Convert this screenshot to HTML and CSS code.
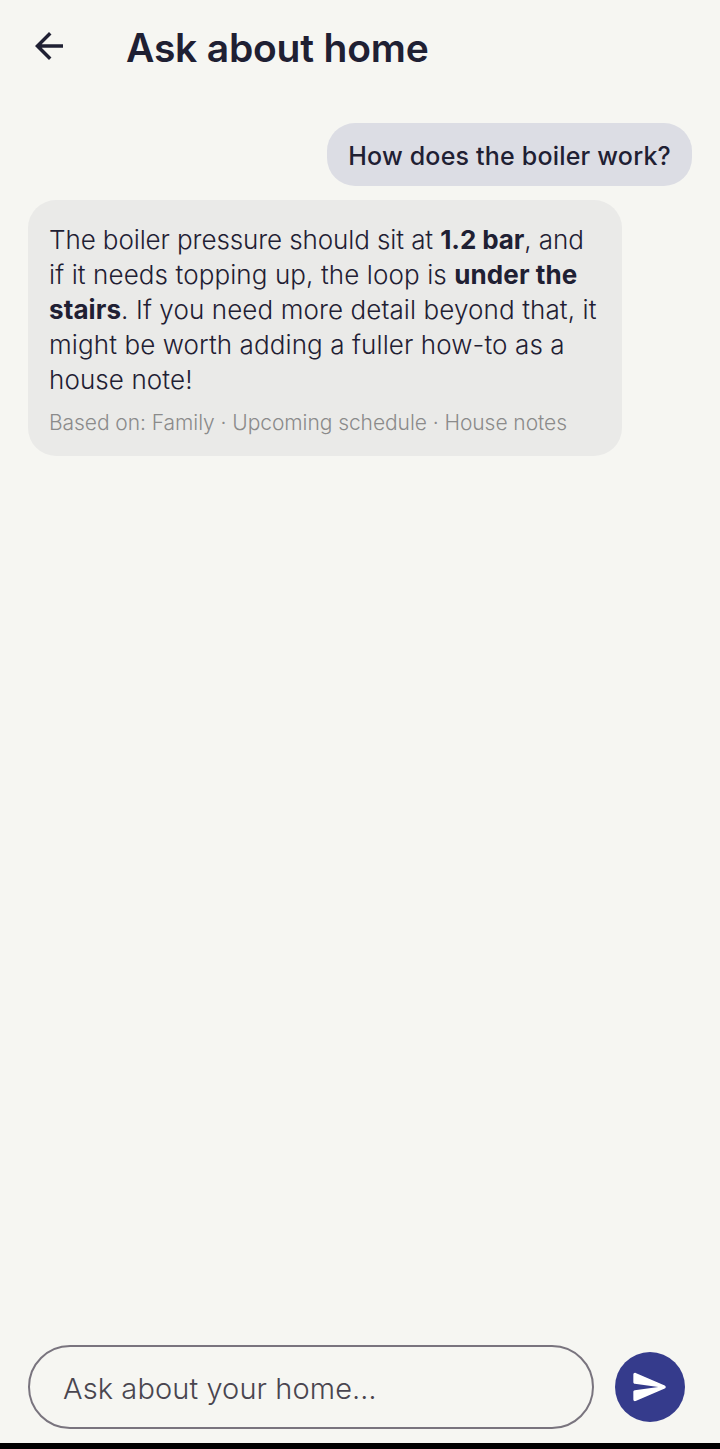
FILE: index.html
```html
<!DOCTYPE html>
<html lang="en">
<head>
<meta charset="utf-8">
<title>Ask about home</title>
<link rel="stylesheet" href="styles.css">
</head>
<body>
<div class="screen">
  <header class="topbar">
    <button class="back" aria-label="Back">
      <svg viewBox="0 0 24 24" width="42" height="42"><path d="M20 11H7.83l5.59-5.59L12 4l-8 8 8 8 1.41-1.41L7.83 13H20v-2z"/></svg>
    </button>
    <h1 class="title">Ask about home</h1>
  </header>
  <main class="thread">
    <div class="bubble user">How does the boiler work?</div>
    <div class="bubble reply">
      <p class="answer"><span class="first-line">The boiler pressure should sit at <b>1.2 bar</b>, and</span><br>if it needs topping up, the loop is <b>under the</b><br><b>stairs</b>. If you need more detail beyond that, it<br>might be worth adding a fuller how-to as a<br>house note!</p>
      <p class="sources">Based on: Family · Upcoming schedule · House notes</p>
    </div>
  </main>
  <footer class="composer">
    <div class="field">Ask about your home…</div>
    <button class="send" aria-label="Send">
      <svg viewBox="0 0 24 24" width="40" height="40"><path d="M3.4 20.4l17.45-7.48c.81-.35.81-1.49 0-1.84L3.4 3.6c-.66-.29-1.39.2-1.39.91L2 9.12c0 .5.37.93.87.99L17 12 2.87 13.88c-.5.07-.87.5-.87 1l.01 4.61c0 .71.73 1.2 1.39.91z"/></svg>
    </button>
  </footer>
  <div class="navbar"></div>
</div>
</body>
</html>
```

FILE: styles.css
```css
* { box-sizing: border-box; }
html, body { margin: 0; padding: 0; }
body { background: #f6f6f2; font-family: Inter, "Liberation Sans", sans-serif; color: #1f2033; }
.screen { display: flex; flex-direction: column; height: 1449px; width: 720px; overflow: hidden; }
.topbar { display: flex; align-items: center; height: 95px; padding-left: 28px; flex: none; }
.back { width: 42px; height: 42px; padding: 0; border: 0; background: none; display: flex; margin-top: -3px; }
.back svg { fill: #1f2033; }
.title { margin: 0 0 0 56px; font-size: 39px; line-height: 48px; font-weight: 600; letter-spacing: -0.2px; }
.thread { flex: 1; display: flex; flex-direction: column; padding: 28px 28px 0; gap: 14px; }
.bubble { border-radius: 28px; }
.user { align-self: flex-end; background: #dcdde4; padding: 16px 21px 0; font-size: 25px; line-height: 35px; font-weight: 500; height: 63px; letter-spacing: 0.2px; }
.reply { width: 594px; height: 256px; background: #eaeae8; padding: 22px 21px 0; }
.answer { margin: 0; font-size: 26px; line-height: 35px; font-weight: 300; white-space: nowrap; letter-spacing: 0.1px; }
.first-line { letter-spacing: -0.1px; }
.answer b { font-weight: 700; }
.sources { margin: 11px 0 0; font-size: 21px; line-height: 30px; font-weight: 300; color: #8b8b8b; white-space: nowrap; letter-spacing: -0.06px; }
.composer { flex: none; display: flex; align-items: center; gap: 21px; padding: 0 35px 14px 28px; }
.field { flex: 1; height: 84px; border: 2px solid #79747e; border-radius: 42px; padding: 2px 0 0 33px; font-size: 29px; line-height: 80px; font-weight: 300; color: #49454f; letter-spacing: 0.1px; }
.send { width: 70px; height: 70px; border: 0; border-radius: 50%; background: #353b8c; padding: 0; display: flex; align-items: center; justify-content: center; }
.send svg { fill: #fff; }
.navbar { flex: none; height: 6px; background: #000; }
```
